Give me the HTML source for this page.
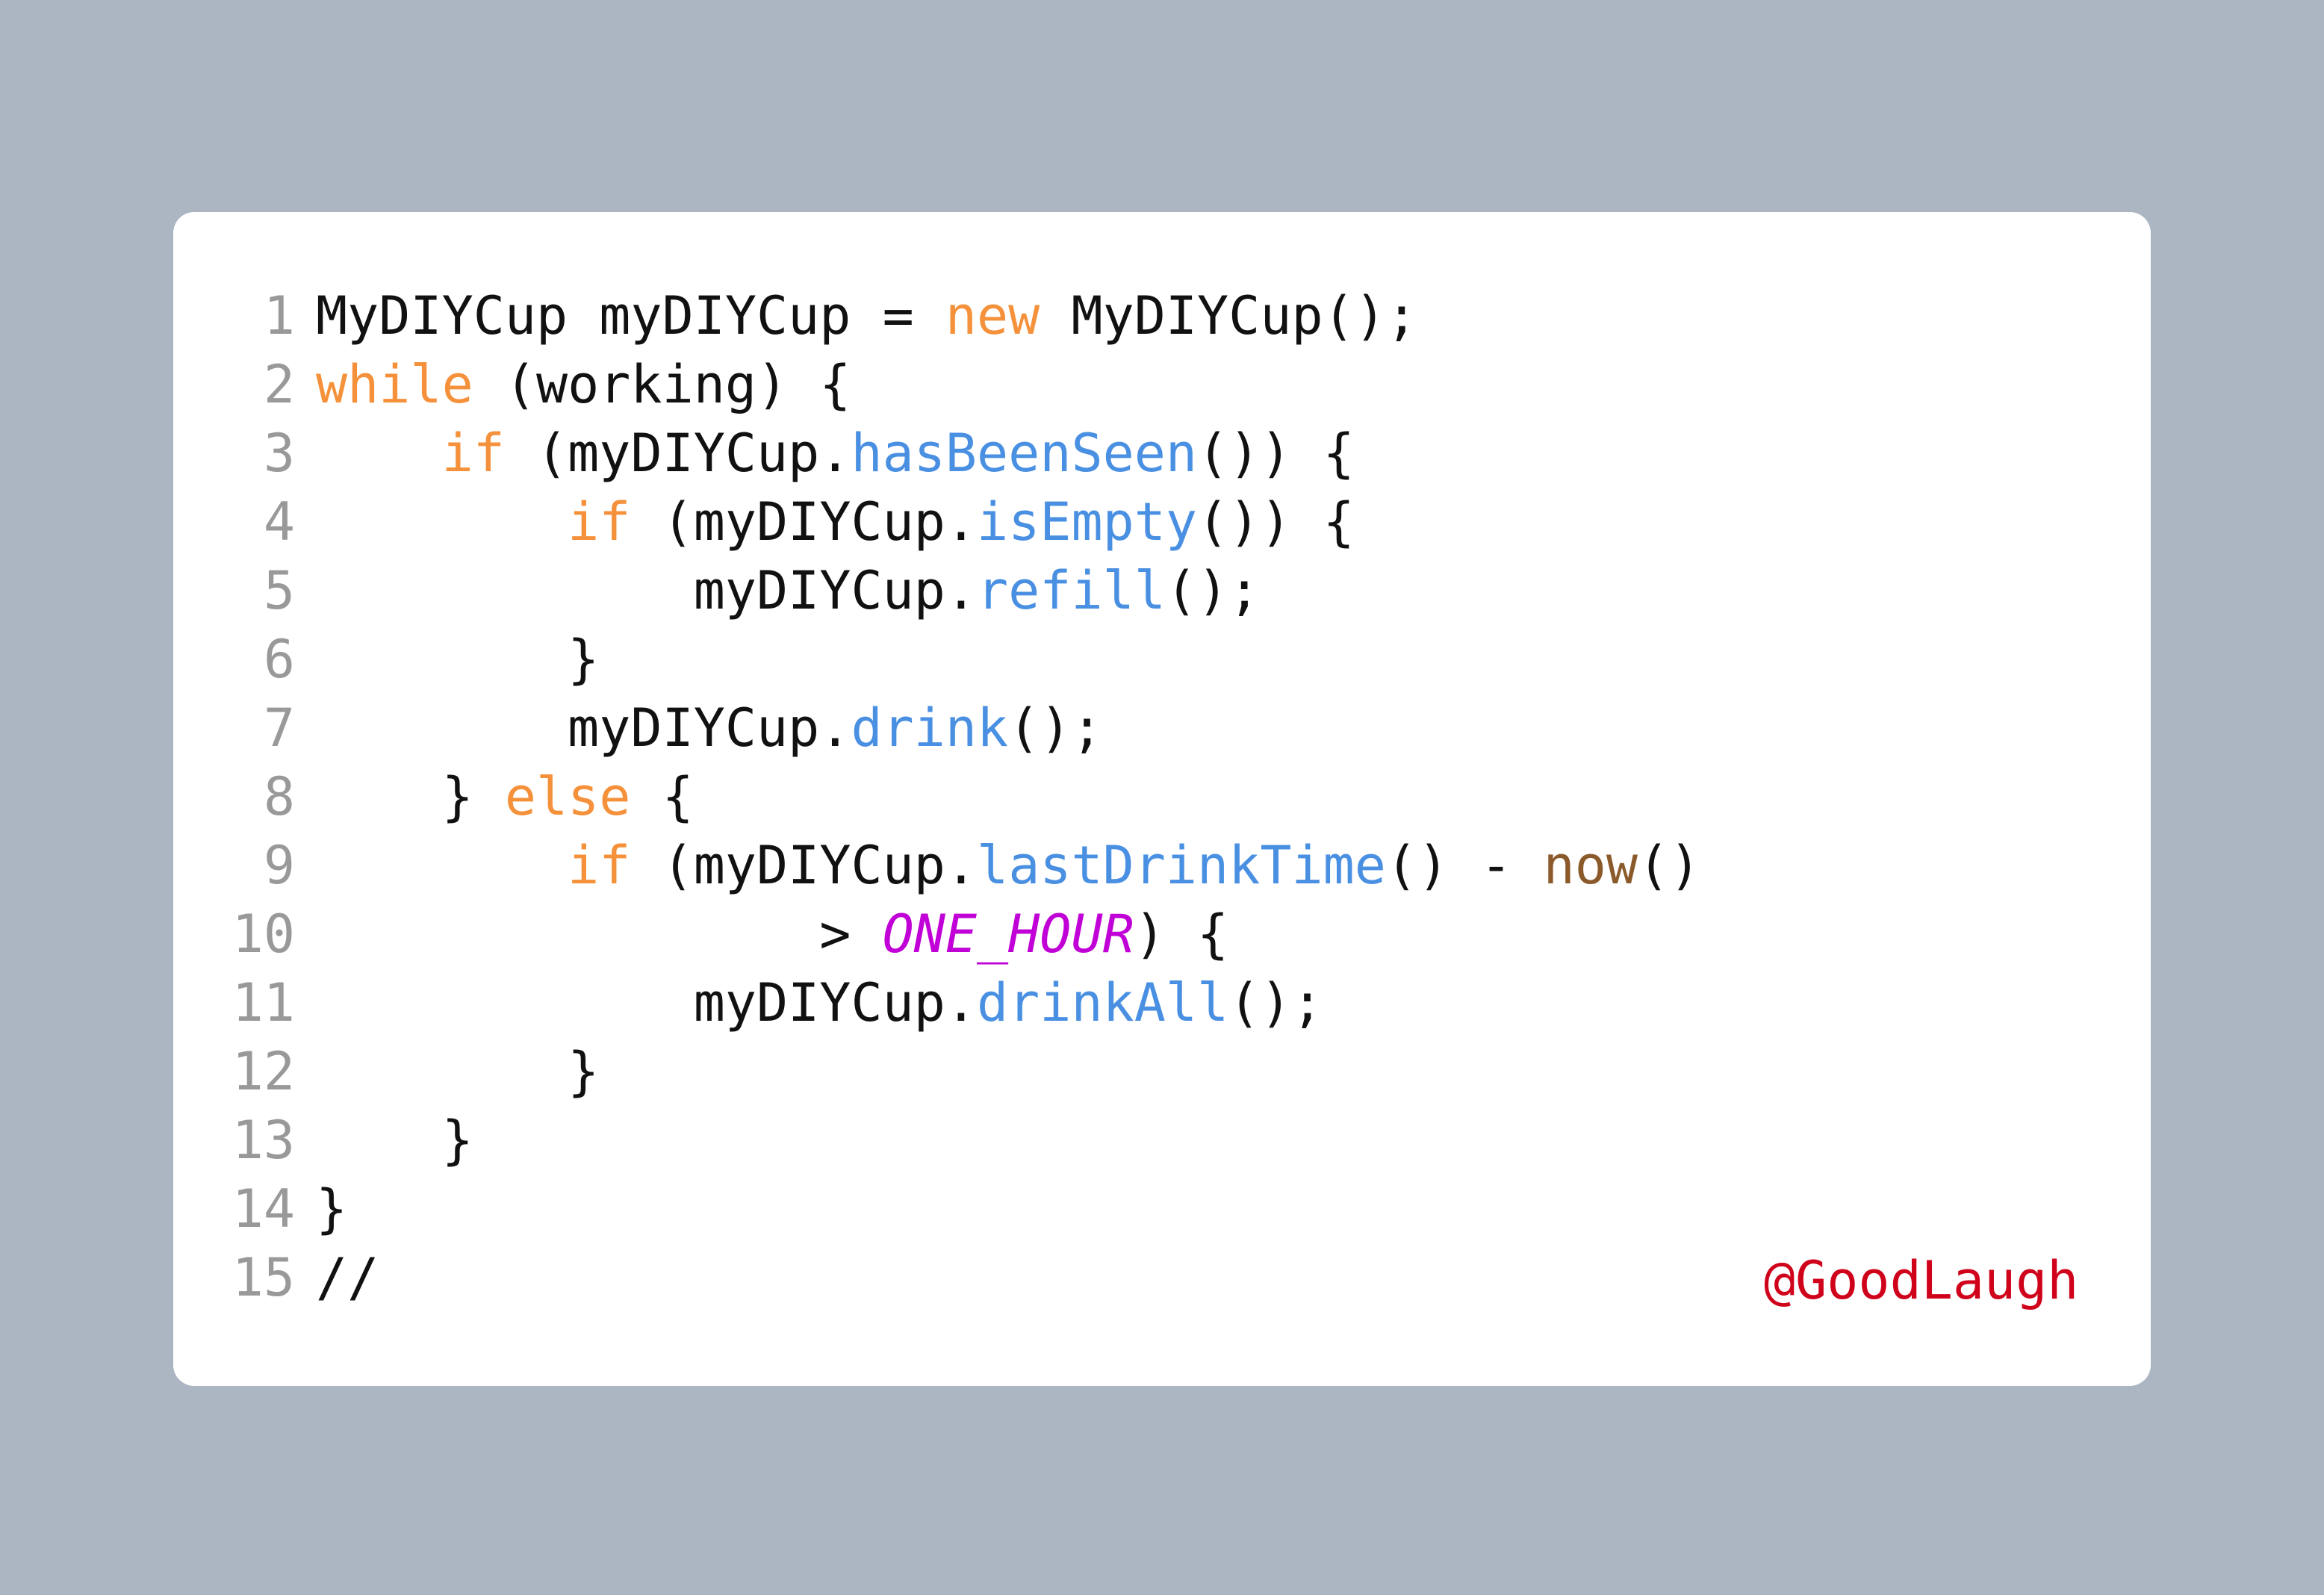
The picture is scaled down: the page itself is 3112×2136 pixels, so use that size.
<!DOCTYPE html>
<html><head><meta charset="utf-8"><style>
html,body{margin:0;padding:0}
body{width:3112px;height:2136px;background:#abb6c2;position:relative;overflow:hidden}
.card{position:absolute;left:232px;top:284px;width:2648px;height:1572px;background:#fff;border-radius:28px}
.code{position:absolute;left:0;top:377px;font-family:"DejaVu Sans Mono","Liberation Mono",monospace;font-size:70px;line-height:92px;white-space:pre;color:#111}
.ln{position:absolute;left:0;width:395px;text-align:right;color:#999;top:377px;font-family:"DejaVu Sans Mono","Liberation Mono",monospace;font-size:70px;line-height:92px;white-space:pre}
.code{left:423px}
.k{color:#f5913a}.f{color:#4a90e2}.b{color:#8b5a2b}.p{color:#c000d6;font-style:italic}
.at{position:absolute;left:2362px;top:1669px;font-family:"DejaVu Sans Mono","Liberation Mono",monospace;font-size:70px;line-height:92px;color:#d0021b}
</style></head><body>
<div class="card"></div>
<div class="ln">1
2
3
4
5
6
7
8
9
10
11
12
13
14
15</div>
<div class="code">MyDIYCup myDIYCup = <span class="k">new</span> MyDIYCup();
<span class="k">while</span> (working) {
    <span class="k">if</span> (myDIYCup.<span class="f">hasBeenSeen</span>()) {
        <span class="k">if</span> (myDIYCup.<span class="f">isEmpty</span>()) {
            myDIYCup.<span class="f">refill</span>();
        }
        myDIYCup.<span class="f">drink</span>();
    } <span class="k">else</span> {
        <span class="k">if</span> (myDIYCup.<span class="f">lastDrinkTime</span>() - <span class="b">now</span>()
                &gt; <span class="p">ONE_HOUR</span>) {
            myDIYCup.<span class="f">drinkAll</span>();
        }
    }
}
//</div>
<div class="at">@GoodLaugh</div>
</body></html>
